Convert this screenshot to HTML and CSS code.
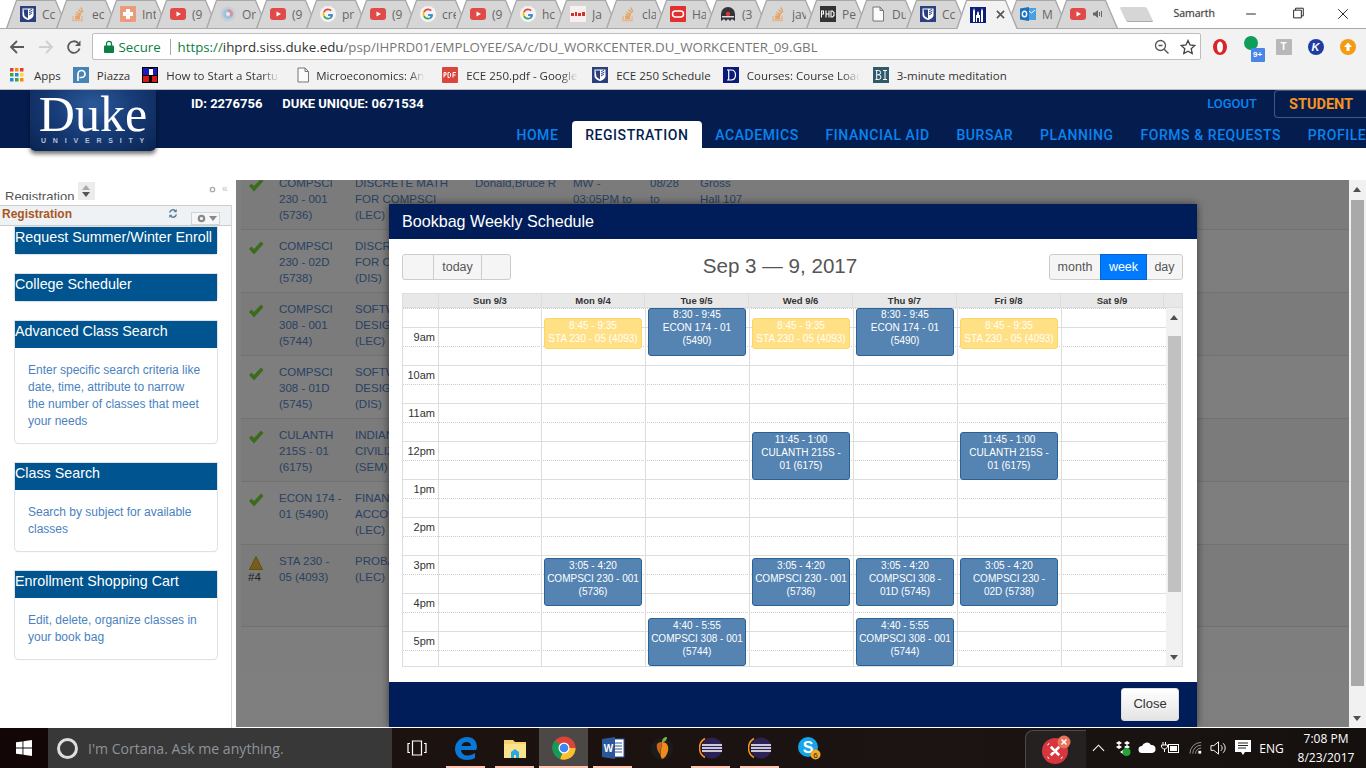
FILE: index.html
```html
<!DOCTYPE html>
<html lang="en">
<head>
<meta charset="utf-8">
<title>Bookbag Weekly Schedule</title>
<link rel="stylesheet" href="styles.css">
</head>
<body>
<svg class="defs" width="0" height="0" aria-hidden="true">
  <symbol id="i-shield" viewBox="0 0 16 16"><rect width="16" height="16" fill="#2b3f7e"/><path d="M2.500 2.500h11v6.500c0 2.500-3 4.200-5.500 5-2.500-.8-5.500-2.500-5.500-5z" fill="#fff"/><path d="M8 3.500v9l-3.500-2.500-1-6.500z" fill="#2b3f7e"/><path d="M9 5l3-2M9 7l3.500-2M9 9l3-2" stroke="#2b3f7e" stroke-width="1"/></symbol>
  <symbol id="i-so" viewBox="0 0 16 16"><path d="M3 10v4.500h9V10" fill="none" stroke="#e9b48c" stroke-width="1.400"/><path d="M5 12.500h5M5 10.500l5 .5M5.500 8.300l5 1.200M6.500 6l4.500 2.300M8.500 3.500l3.500 3.500M11 1.500l1.800 4.500" stroke="#e8a05e" stroke-width="1.300" fill="none"/></symbol>
  <symbol id="i-plus" viewBox="0 0 16 16"><rect width="16" height="16" rx="1" fill="#eb9b7a"/><path d="M6 3h4v3h3v4h-3v3H6v-3H3V6h3z" fill="#fff"/></symbol>
  <symbol id="i-yt" viewBox="0 0 16 16"><rect y="2" width="16" height="12" rx="3" fill="#e04a4a"/><path d="M6.500 5.500l4.500 2.500-4.500 2.500z" fill="#fff"/></symbol>
  <symbol id="i-orb" viewBox="0 0 16 16"><circle cx="8" cy="8" r="7.500" fill="#c9ced6"/><circle cx="8" cy="8" r="5" fill="#9dc4dc"/><path d="M8 3a5 5 0 0 1 4 8L8 8z" fill="#d88fa8"/><circle cx="8" cy="8" r="2" fill="#e8e8e8"/></symbol>
  <symbol id="i-g" viewBox="0 0 16 16"><circle cx="8" cy="8" r="8" fill="#f4f4f4"/><path d="M12.600 8.200H8.200v1.700h2.500c-.3 1.200-1.300 1.900-2.600 1.900A3.800 3.800 0 0 1 4.600 9.500L3.200 10.600A5.500 5.500 0 0 0 8.100 13.500c2.900 0 4.700-2 4.700-4.700z" fill="#35a853"/><path d="M4.600 9.500a3.800 3.800 0 0 1 0-3l-1.400-1.100a5.500 5.500 0 0 0 0 5.200z" fill="#fbbc05"/><path d="M8.100 4.200c1 0 1.800.3 2.500 1l1.200-1.200A5.500 5.500 0 0 0 3.200 5.400l1.400 1.100a3.800 3.800 0 0 1 3.500-2.300z" fill="#ea4335"/><path d="M12.800 8.800c0-.3 0-.6-.2-.6H8.200v1.700h2.500c-.2.700-.5 1.100-1 1.400l1.400 1.100c1-.9 1.700-2 1.700-3.600z" fill="#4285f4"/></symbol>
  <symbol id="i-news" viewBox="0 0 16 16"><rect width="16" height="16" fill="#f7f0ee"/><path d="M1 7h3v3H1zM5 6h2v4H5zM8 7h3v3H8zM12 6h3v4h-3z" fill="#d3312c"/></symbol>
  <symbol id="i-ora" viewBox="0 0 16 16"><rect width="16" height="16" rx="1" fill="#e2302f"/><rect x="2.500" y="5" width="11" height="6" rx="3" fill="none" stroke="#fff" stroke-width="1.500"/></symbol>
  <symbol id="i-mask" viewBox="0 0 16 16"><path d="M1 15V8a7 7 0 0 1 14 0v7l-3-2-2 2-2-2-2 2-2-2z" fill="#33333a"/><circle cx="8" cy="8" r="2.200" fill="#d33"/><rect x="2" y="10" width="12" height="1.500" fill="#ddd"/></symbol>
  <symbol id="i-phd" viewBox="0 0 16 16"><rect width="16" height="16" fill="#333"/><path d="M1.500 4.500v7M1.500 5h2v3h-2M6 4.500v7M9 4.500v7M6 8h3M11 4.500v7M11 5h1.500l1.500 1.500v3L12.500 11H11" fill="none" stroke="#fff" stroke-width="1.100"/></symbol>
  <symbol id="i-doc" viewBox="0 0 16 16"><path d="M3 1h7l3.500 3.500V15H3zM10 1v3.500h3.500" fill="#fbfbfb" stroke="#777" stroke-width="1"/></symbol>
  <symbol id="i-chapel" viewBox="0 0 16 16"><rect width="16" height="16" fill="#0b1f78"/><path d="M3 15V4l1-3 1 3v11zM6 15V8h1V6l1-2 1 2v2h1v7zM11 15V4l1-3 1 3v11z" fill="#fff"/><path d="M7 15v-4h2v4z" fill="#0b1f78"/></symbol>
  <symbol id="i-out" viewBox="0 0 16 16"><rect x="6" y="2" width="10" height="12" fill="#4aa0e0"/><path d="M9 5l2.500 2L15 4" stroke="#fff" fill="none"/><path d="M0 2.500L9 1v14L0 13.500z" fill="#1c72bd"/><ellipse cx="4.500" cy="8" rx="2.200" ry="2.800" fill="none" stroke="#fff" stroke-width="1.400"/></symbol>
  <symbol id="i-piazza" viewBox="0 0 16 16"><rect width="16" height="16" fill="#4684b5"/><path d="M5 14V7a3.500 3.500 0 1 1 3.500 3.500H6.500" fill="none" stroke="#fff" stroke-width="1.700"/></symbol>
  <symbol id="i-start" viewBox="0 0 16 16"><rect width="16" height="16" fill="#000"/><rect x="1" y="1" width="6" height="7" fill="#1a1ac0"/><rect x="7" y="2" width="4" height="6" fill="#fff"/><rect x="11" y="1" width="4" height="7" fill="#1a1ac0"/><rect x="1" y="9" width="6" height="6" fill="#d81a1a"/><rect x="10" y="9" width="5" height="6" fill="#d81a1a"/></symbol>
  <symbol id="i-speak" viewBox="0 0 12 12"><path d="M1 4.500h2L6 2v8L3 7.500H1z" fill="#666"/><path d="M7.500 4v4M9.500 3v6" stroke="#666" stroke-width="1"/></symbol>
</svg>

<div class="tabstrip">
  <div class="tab"><svg class="fav"><use href="#i-shield"/></svg><span class="tab-t">Cc</span></div>
  <div class="tab"><svg class="fav"><use href="#i-so"/></svg><span class="tab-t">ec</span></div>
  <div class="tab"><svg class="fav"><use href="#i-plus"/></svg><span class="tab-t">Int</span></div>
  <div class="tab"><svg class="fav"><use href="#i-yt"/></svg><span class="tab-t">(9</span></div>
  <div class="tab"><svg class="fav"><use href="#i-orb"/></svg><span class="tab-t">Or</span></div>
  <div class="tab"><svg class="fav"><use href="#i-yt"/></svg><span class="tab-t">(9</span></div>
  <div class="tab"><svg class="fav"><use href="#i-g"/></svg><span class="tab-t">pr</span></div>
  <div class="tab"><svg class="fav"><use href="#i-yt"/></svg><span class="tab-t">(9</span></div>
  <div class="tab"><svg class="fav"><use href="#i-g"/></svg><span class="tab-t">cre</span></div>
  <div class="tab"><svg class="fav"><use href="#i-yt"/></svg><span class="tab-t">(9</span></div>
  <div class="tab"><svg class="fav"><use href="#i-g"/></svg><span class="tab-t">hc</span></div>
  <div class="tab"><svg class="fav"><use href="#i-news"/></svg><span class="tab-t">Ja</span></div>
  <div class="tab"><svg class="fav"><use href="#i-so"/></svg><span class="tab-t">cla</span></div>
  <div class="tab"><svg class="fav"><use href="#i-ora"/></svg><span class="tab-t">Ha</span></div>
  <div class="tab"><svg class="fav"><use href="#i-mask"/></svg><span class="tab-t">(3</span></div>
  <div class="tab"><svg class="fav"><use href="#i-so"/></svg><span class="tab-t">jav</span></div>
  <div class="tab"><svg class="fav"><use href="#i-phd"/></svg><span class="tab-t">Pe</span></div>
  <div class="tab"><svg class="fav"><use href="#i-doc"/></svg><span class="tab-t">Du</span></div>
  <div class="tab"><svg class="fav"><use href="#i-shield"/></svg><span class="tab-t">Cc</span></div>
  <div class="tab tab-active"><svg class="fav"><use href="#i-chapel"/></svg><svg class="tab-x" viewBox="0 0 10 10"><path d="M1 1l8 8M9 1l-8 8" stroke="#555" stroke-width="1.800"/></svg></div>
  <div class="tab"><svg class="fav"><use href="#i-out"/></svg><span class="tab-t">M</span></div>
  <div class="tab"><svg class="fav"><use href="#i-yt"/></svg><svg class="speak"><use href="#i-speak"/></svg></div>
  <div class="newtab"></div>
  <div class="winctl">
    <span class="profile">Samarth</span>
    <svg class="win-ic" viewBox="0 0 46 29"><path d="M18 14.500h10" stroke="#222" stroke-width="1"/></svg>
    <svg class="win-ic" viewBox="0 0 46 29"><path d="M19.500 10.500h8v8h-8zM21.500 10.500v-2h8v8h-2" fill="none" stroke="#222" stroke-width="1"/></svg>
    <svg class="win-ic" viewBox="0 0 46 29"><path d="M18 9.500l10 10M28 9.500l-10 10" stroke="#222" stroke-width="1"/></svg>
  </div>
</div>

<div class="toolbar">
  <svg class="nav-ic" viewBox="0 0 16 16"><path d="M15 8H2M8 2L2 8l6 6" fill="none" stroke="#5a5a5a" stroke-width="1.800"/></svg>
  <svg class="nav-ic" viewBox="0 0 16 16"><path d="M1 8h13M8 2l6 6-6 6" fill="none" stroke="#cfcfcf" stroke-width="1.800"/></svg>
  <svg class="nav-ic" viewBox="0 0 16 16"><path d="M13.500 9.500A5.800 5.800 0 1 1 12 4" fill="none" stroke="#5a5a5a" stroke-width="1.800"/><path d="M14.500 1.500v5.500H9z" fill="#5a5a5a"/></svg>
  <div class="omnibox">
    <svg class="lock" viewBox="0 0 10 13"><path d="M2.500 6V3.800a2.500 2.500 0 0 1 5 0V6" fill="none" stroke="#0b8043" stroke-width="1.300"/><rect y="5.500" width="10" height="7.500" rx="1" fill="#0b8043"/></svg>
    <span class="secure">Secure</span>
    <span class="sep"></span>
    <span class="url"><span class="url-s">https://</span><span class="url-h">ihprd.siss.duke.edu</span>/psp/IHPRD01/EMPLOYEE/SA/c/DU_WORKCENTER.DU_WORKCENTER_09.GBL</span>
    <svg class="omni-ic" viewBox="0 0 16 16"><circle cx="6.500" cy="6.500" r="5" fill="none" stroke="#555" stroke-width="1.300"/><path d="M4.500 6.500h4M10.200 10.200l4.300 4.300" stroke="#555" stroke-width="1.400"/></svg>
    <svg class="omni-ic" viewBox="0 0 16 16"><path d="M8 1.500l2 4.500 4.800.5-3.600 3.200 1 4.800L8 12.200l-4.200 2.300 1-4.800L1.200 6.500 6 6z" fill="none" stroke="#444" stroke-width="1.300"/></svg>
  </div>
  <svg class="ext" viewBox="0 0 16 16"><ellipse cx="8" cy="8" rx="7" ry="8" fill="#d9252a"/><ellipse cx="8" cy="8" rx="3" ry="5.500" fill="#fff"/></svg>
  <span class="ext ext-badge"><span class="green-dot"></span><span class="badge">9+</span></span>
  <span class="ext ext-t">T</span>
  <span class="ext ext-k">K</span>
  <svg class="ext" viewBox="0 0 16 16"><circle cx="8" cy="8" r="8" fill="#f39c12"/><path d="M8 3.500L12 8H9.500v4h-3V8H4z" fill="#fff"/></svg>
</div>

<div class="bookmarks">
  <span class="bm bm-apps"><svg class="bm-ic apps" viewBox="0 0 14 14"><rect width="3.500" height="3.500" fill="#e53935"/><rect x="5" width="3.500" height="3.500" fill="#fb8c00"/><rect x="10" width="3.500" height="3.500" fill="#e53935"/><rect y="5" width="3.500" height="3.500" fill="#43a047"/><rect x="5" y="5" width="3.500" height="3.500" fill="#1e88e5"/><rect x="10" y="5" width="3.500" height="3.500" fill="#fdd835"/><rect y="10" width="3.500" height="3.500" fill="#1e88e5"/><rect x="5" y="10" width="3.500" height="3.500" fill="#43a047"/><rect x="10" y="10" width="3.500" height="3.500" fill="#fb8c00"/></svg>Apps</span>
  <span class="bm bm-piazza"><svg class="bm-ic"><use href="#i-piazza"/></svg>Piazza</span>
  <span class="bm bm-start"><svg class="bm-ic"><use href="#i-start"/></svg><span class="bm-fade">How to Start a Startup</span></span>
  <span class="bm bm-micro"><svg class="bm-ic"><use href="#i-doc"/></svg><span class="bm-fade">Microeconomics: An Intuitive</span></span>
  <span class="bm bm-pdf"><svg class="bm-ic" viewBox="0 0 16 16"><rect width="16" height="16" rx="1" fill="#d9463e"/><path d="M2 10.500v-5h2v2.500H2M6 5.500v5h1.500l1-1v-3l-1-1zM11 10.500v-5h3M11 8h2.500" fill="none" stroke="#fff" stroke-width="1"/></svg><span class="bm-fade">ECE 250.pdf - Google Drive</span></span>
  <span class="bm bm-sched"><svg class="bm-ic"><use href="#i-shield"/></svg>ECE 250 Schedule</span>
  <span class="bm bm-course"><svg class="bm-ic" viewBox="0 0 16 16"><rect width="16" height="16" fill="#0a1a7a"/><path d="M4 3h4c3 0 4.500 2.200 4.500 5s-1.500 5-4.500 5H4M5.700 3v10" fill="none" stroke="#fff" stroke-width="1.200"/></svg><span class="bm-fade">Courses: Course Load</span></span>
  <span class="bm"><svg class="bm-ic" viewBox="0 0 16 16"><rect width="16" height="16" fill="#2f5a6a"/><path d="M2.500 3.500h3a1.800 1.800 0 0 1 0 4.200 2 2 0 0 1 0 4.800h-3M3.700 3.500v9M3.700 7.800h2M10 3.500h4M10 12.500h4M12 3.500v9" fill="none" stroke="#fff" stroke-width="1"/></svg>3-minute meditation</span>
</div>

<header class="duke">
  <div class="logo"><span class="logo-d">Duke</span><span class="logo-u">UNIVERSITY</span></div>
  <div class="duke-main">
    <div class="duke-top">
      <div class="ids"><span>ID: 2276756</span><span>DUKE UNIQUE: 0671534</span></div>
      <div class="duke-right"><span class="logout">LOGOUT</span><span class="student">STUDENT</span></div>
    </div>
    <nav class="mainnav">
      <span class="nav-item">HOME</span>
      <span class="nav-item nav-on">REGISTRATION</span>
      <span class="nav-item">ACADEMICS</span>
      <span class="nav-item">FINANCIAL AID</span>
      <span class="nav-item">BURSAR</span>
      <span class="nav-item">PLANNING</span>
      <span class="nav-item">FORMS &amp; REQUESTS</span>
      <span class="nav-item">PROFILE</span>
    </nav>
  </div>
</header>

<div class="content">
  <aside class="sidebar">
    <div class="crumb">
      <span class="crumb-t">Registration</span>
      <span class="crumb-arrows"><i class="ar-up"></i><i class="ar-down"></i></span>
      <span class="crumb-tools"><svg class="mini-gear" viewBox="0 0 8 8"><circle cx="4" cy="4" r="2.500" fill="none" stroke="#aaa" stroke-width="1.500"/></svg><span class="crumb-dbl">«</span></span>
    </div>
    <div class="panelbar">
      <span class="panel-t">Registration</span>
      <svg class="refresh" viewBox="0 0 12 12"><path d="M2 5a4 4 0 0 1 7-2M10 7a4 4 0 0 1-7 2" fill="none" stroke="#5a7f9c" stroke-width="1.700"/><path d="M10.500.5v4h-4zM1.500 11.500v-4h4z" fill="#5a7f9c"/></svg>
      <span class="gearbtn"><svg viewBox="0 0 10 10" class="gear"><circle cx="5" cy="5" r="3" fill="none" stroke="#888" stroke-width="2.400"/></svg><i class="caret"></i></span>
    </div>
    <div class="cards">
      <section class="card"><h3 class="card-h">Request Summer/Winter Enroll</h3></section>
      <section class="card"><h3 class="card-h">College Scheduler</h3></section>
      <section class="card"><h3 class="card-h">Advanced Class Search</h3><p class="card-b">Enter specific search criteria like date, time, attribute to narrow the number of classes that meet your needs</p></section>
      <section class="card"><h3 class="card-h">Class Search</h3><p class="card-b">Search by subject for available classes</p></section>
      <section class="card"><h3 class="card-h">Enrollment Shopping Cart</h3><p class="card-b">Edit, delete, organize classes in your book bag</p></section>
    </div>
  </aside>

  <main class="main">
    <div class="rows">
      <div class="row"><svg class="ok" viewBox="0 0 16 14"><path d="M1 8l2.500-2.500L6 8l7-7.500L15.500 3 6 13.500z"/></svg><div class="c-class">COMPSCI<br>230 - 001<br>(5736)</div><div class="c-title">DISCRETE MATH<br>FOR COMPSCI<br>(LEC)</div><div class="c-inst">Donald,Bruce R</div><div class="c-time">MW -<br>03:05PM to</div><div class="c-date">08/28<br>to</div><div class="c-room">Gross<br>Hall 107</div></div>
      <div class="row"><svg class="ok" viewBox="0 0 16 14"><path d="M1 8l2.500-2.500L6 8l7-7.500L15.500 3 6 13.500z"/></svg><div class="c-class">COMPSCI<br>230 - 02D<br>(5738)</div><div class="c-title">DISCRETE MATH<br>FOR COMPSCI<br>(DIS)</div></div>
      <div class="row"><svg class="ok" viewBox="0 0 16 14"><path d="M1 8l2.500-2.500L6 8l7-7.500L15.500 3 6 13.500z"/></svg><div class="c-class">COMPSCI<br>308 - 001<br>(5744)</div><div class="c-title">SOFTWARE<br>DESIGN<br>(LEC)</div></div>
      <div class="row"><svg class="ok" viewBox="0 0 16 14"><path d="M1 8l2.500-2.500L6 8l7-7.500L15.500 3 6 13.500z"/></svg><div class="c-class">COMPSCI<br>308 - 01D<br>(5745)</div><div class="c-title">SOFTWARE<br>DESIGN<br>(DIS)</div></div>
      <div class="row"><svg class="ok" viewBox="0 0 16 14"><path d="M1 8l2.500-2.500L6 8l7-7.500L15.500 3 6 13.500z"/></svg><div class="c-class">CULANTH<br>215S - 01<br>(6175)</div><div class="c-title">INDIAN<br>CIVILIZATION<br>(SEM)</div></div>
      <div class="row"><svg class="ok" viewBox="0 0 16 14"><path d="M1 8l2.500-2.500L6 8l7-7.500L15.500 3 6 13.500z"/></svg><div class="c-class">ECON 174 -<br>01 (5490)</div><div class="c-title">FINANCIAL<br>ACCOUNTING<br>(LEC)</div></div>
      <div class="row row-wait"><div class="warn"><svg viewBox="0 0 14 14"><path d="M7 .5L13.500 13.500H.5z" fill="#f0bc3a" stroke="#c89a20"/></svg><span>#4</span></div><div class="c-class">STA 230 -<br>05 (4093)</div><div class="c-title">PROBABILITY<br>(LEC)</div></div>
      <div class="row row-foot"></div>
    </div>
    <div class="overlay"></div>
    <div class="modal">
      <div class="modal-h">Bookbag Weekly Schedule</div>
      <div class="modal-b">
        <div class="cal-bar">
          <div class="btns"><span class="btn btn-prev"></span><span class="btn btn-today">today</span><span class="btn btn-next"></span></div>
          <div class="cal-title">Sep 3 — 9, 2017</div>
          <div class="btns"><span class="btn btn-month">month</span><span class="btn btn-week">week</span><span class="btn btn-day">day</span></div>
        </div>
        <div class="cal">
          <div class="cal-head">
            <span></span><span>Sun 9/3</span><span>Mon 9/4</span><span>Tue 9/5</span><span>Wed 9/6</span><span>Thu 9/7</span><span>Fri 9/8</span><span>Sat 9/9</span><span></span>
          </div>
          <div class="cal-body">
            <div class="grid">
              <div class="slot minor"></div>
              <div class="slot"><span>9am</span></div><div class="slot minor"></div>
              <div class="slot"><span>10am</span></div><div class="slot minor"></div>
              <div class="slot"><span>11am</span></div><div class="slot minor"></div>
              <div class="slot"><span>12pm</span></div><div class="slot minor"></div>
              <div class="slot"><span>1pm</span></div><div class="slot minor"></div>
              <div class="slot"><span>2pm</span></div><div class="slot minor"></div>
              <div class="slot"><span>3pm</span></div><div class="slot minor"></div>
              <div class="slot"><span>4pm</span></div><div class="slot minor"></div>
              <div class="slot"><span>5pm</span></div><div class="slot minor"></div>
              <div class="cols">
                <div class="col"></div>
                <div class="col">
                  <div class="ev ev-y t845">8:45 - 9:35<br>STA 230 - 05 (4093)</div>
                  <div class="ev t305">3:05 - 4:20<br>COMPSCI 230 - 001 (5736)</div>
                </div>
                <div class="col">
                  <div class="ev t830">8:30 - 9:45<br>ECON 174 - 01 (5490)</div>
                  <div class="ev t440">4:40 - 5:55<br>COMPSCI 308 - 001 (5744)</div>
                </div>
                <div class="col">
                  <div class="ev ev-y t845">8:45 - 9:35<br>STA 230 - 05 (4093)</div>
                  <div class="ev t1145">11:45 - 1:00<br>CULANTH 215S - 01 (6175)</div>
                  <div class="ev t305">3:05 - 4:20<br>COMPSCI 230 - 001 (5736)</div>
                </div>
                <div class="col">
                  <div class="ev t830">8:30 - 9:45<br>ECON 174 - 01 (5490)</div>
                  <div class="ev t305">3:05 - 4:20<br>COMPSCI 308 - 01D (5745)</div>
                  <div class="ev t440">4:40 - 5:55<br>COMPSCI 308 - 001 (5744)</div>
                </div>
                <div class="col">
                  <div class="ev ev-y t845">8:45 - 9:35<br>STA 230 - 05 (4093)</div>
                  <div class="ev t1145">11:45 - 1:00<br>CULANTH 215S - 01 (6175)</div>
                  <div class="ev t305">3:05 - 4:20<br>COMPSCI 230 - 02D (5738)</div>
                </div>
                <div class="col"></div>
              </div>
            </div>
            <div class="cal-scroll"><i class="sb-up"></i><div class="sb-thumb"></div><i class="sb-down"></i></div>
          </div>
        </div>
      </div>
      <div class="modal-f"><span class="close-btn">Close</span></div>
    </div>
  </main>

  <div class="page-scroll"><i class="sb-up"></i><div class="ps-thumb"></div><i class="sb-down"></i></div>
</div>

<footer class="taskbar">
  <span class="start"><svg viewBox="0 0 16 16" class="win"><path d="M0 2.300L6.500 1.400v6.200H0zM7.400 1.300L16 0v7.600H7.400zM0 8.400h6.500v6.200L0 13.700zM7.400 8.400H16V16l-8.600-1.300z" fill="#fff"/></svg></span>
  <span class="search"><span class="cortana"></span><span class="search-t">I'm Cortana. Ask me anything.</span></span>
  <span class="tb-item"><svg viewBox="0 0 20 16" class="tb-ic-v"><path d="M5.500 1h9v14h-9zM3 3.500H1v9h2M17 3.500h2v9h-2" fill="none" stroke="#fff" stroke-width="1.200"/></svg></span>
  <span class="tb-item on"><svg viewBox="0 0 24 24" class="tb-ic"><path d="M22 14H7c.3 3.500 3 5.500 6.500 5.500 3 0 5.500-1 7.500-2.500v5c-2 1.200-5 2-8 2C6 24 1 19.500 1 13 1 6 6.500 1 13 1c6 0 10 4 10 10.500zM7.500 10h9.500c0-2.500-1.800-4-4.500-4-2.500 0-4.500 1.500-5 4z" fill="#0a78d7"/></svg></span>
  <span class="tb-item on"><svg viewBox="0 0 24 24" class="tb-ic"><path d="M1 4h9l2 2h11v16H1z" fill="#f5d36c"/><path d="M1 8h22v14H1z" fill="#fbe38e"/><path d="M8 22v-6l4-3 4 3v6h-3v-3h-2v3z" fill="#28a8e0"/></svg></span>
  <span class="tb-item on tb-active"><svg viewBox="0 0 24 24" class="tb-ic"><circle cx="12" cy="12" r="11.500" fill="#db4437"/><path d="M12 12L2 18A11.500 11.500 0 0 1 3 4.500z" fill="#0f9d58"/><path d="M12 12h11.500A11.500 11.500 0 0 1 8 23z" fill="#fbc02d"/><path d="M12 12L8 23A11.500 11.500 0 0 1 2 18z" fill="#0f9d58"/><circle cx="12" cy="12" r="5.500" fill="#fff"/><circle cx="12" cy="12" r="4.300" fill="#4285f4"/></svg></span>
  <span class="tb-item on"><svg viewBox="0 0 24 24" class="tb-ic"><rect x="10" y="3" width="13" height="18" fill="#fff" stroke="#2b579a"/><path d="M14 7h7M14 10h7M14 13h7M14 16h7" stroke="#2b579a"/><path d="M1 3l13-2v22L1 21z" fill="#2b579a"/><text x="7.500" y="16" font-family="Liberation Sans, sans-serif" font-size="10" font-weight="700" fill="#fff" text-anchor="middle">W</text></svg></span>
  <span class="tb-item"><svg viewBox="0 0 24 24" class="tb-ic"><circle cx="12" cy="13" r="11" fill="#1b1b1b"/><path d="M12 6c5 0 7 4 6 9-1 4-3 7-6 8-2-3-2-6-1-9z" fill="#f08a1c"/><path d="M7 8c2-2 4-2 5-2l-2 12c-2-2-4-6-3-10z" fill="#c9651a"/><path d="M12 6c0-3 2-5 5-5 0 3-2 5-5 5z" fill="#7cb342"/></svg></span>
  <span class="tb-item on"><svg viewBox="0 0 24 24" class="tb-ic"><circle cx="13" cy="12" r="10.500" fill="#2c2255"/><path d="M6 2.500A11 11 0 0 0 6 21.500" fill="none" stroke="#f7941e" stroke-width="1.500"/><path d="M3 9h20M3 12h20M3 15h20" stroke="#fff" stroke-width="1.500"/></svg></span>
  <span class="tb-item on"><svg viewBox="0 0 24 24" class="tb-ic"><circle cx="13" cy="12" r="10.500" fill="#2c2255"/><path d="M6 2.500A11 11 0 0 0 6 21.500" fill="none" stroke="#f7941e" stroke-width="1.500"/><path d="M3 9h20M3 12h20M3 15h20" stroke="#fff" stroke-width="1.500"/></svg></span>
  <span class="tb-item"><svg viewBox="0 0 24 24" class="tb-ic"><circle cx="11" cy="11" r="10" fill="#16a5e8"/><text x="11" y="17" font-family="Liberation Sans, sans-serif" font-size="16" font-weight="700" fill="#fff" text-anchor="middle">S</text><circle cx="18.500" cy="18.500" r="5" fill="#f9a825"/><text x="18.500" y="22" font-family="Liberation Sans, sans-serif" font-size="8" fill="#222" text-anchor="middle">6</text></svg></span>
  <span class="tray">
    <span class="tray-app"><svg viewBox="0 0 30 30" class="tray-red"><circle cx="14" cy="16" r="13" fill="#d8363e"/><path d="M14 16L7 9M14 16l7 7M14 16l7-7M14 16l-7 7" stroke="#fff" stroke-width="2.500" stroke-dasharray="6 3"/><circle cx="23" cy="7" r="6.500" fill="#e8735a"/><path d="M20.500 4.500l5 5M25.500 4.500l-5 5" stroke="#fff" stroke-width="1.500"/></svg></span>
    <svg viewBox="0 0 14 8" class="t-chev"><path d="M1 7l6-6 6 6" fill="none" stroke="#fff" stroke-width="1.200"/></svg>
    <svg viewBox="0 0 16 16" class="t-16 t-sync"><path d="M1 3l3-2 3 2-3 2zM9 3l3-2 3 2-3 2zM1 7l3-2 3 2-3 2zM9 7l3-2 3 2-3 2zM5 12l3-2 3 2-3 2z" fill="#fff"/><circle cx="11.500" cy="12" r="4" fill="#21a336"/></svg>
    <svg viewBox="0 0 18 12" class="t-cloud"><path d="M4 11a3.500 3.500 0 0 1 0-7 5 5 0 0 1 9-1 4 4 0 0 1 1 8z" fill="#fff"/></svg>
    <svg viewBox="0 0 20 12" class="t-batt"><path d="M3 0v3M5.500 0v3M1.500 3h6v2l-2 2H3.500l-2-2zM4.500 7v3" fill="none" stroke="#fff"/><rect x="8.500" y="2.500" width="10" height="8" fill="none" stroke="#fff"/><rect x="10" y="4" width="7" height="5" fill="#fff"/></svg>
    <svg viewBox="0 0 16 14" class="t-wifi"><path d="M1 13A12 12 0 0 1 13 1M4 13a9 9 0 0 1 9-9M7 13a6 6 0 0 1 6-6" fill="none" stroke="#999" stroke-width="1"/><rect x="10" y="10" width="3" height="3" fill="#fff"/></svg>
    <svg viewBox="0 0 18 16" class="t-vol"><path d="M1 5.500h3L9 1.500v13l-5-4H1z" fill="none" stroke="#fff"/><path d="M11.500 5a4 4 0 0 1 0 6M14 3a7 7 0 0 1 0 10" fill="none" stroke="#fff"/></svg>
    <svg viewBox="0 0 16 16" class="t-16 t-note"><path d="M0 0h16v12h-6l-2 3-2-3H0z" fill="#fff"/><path d="M3 3h10M3 5.500h10M3 8h8" stroke="#222"/></svg>
    <span class="t-eng">ENG</span>
    <span class="t-clock"><span>7:08 PM</span><span>8/23/2017</span></span>
  </span>
</footer>
</body>
</html>
```

FILE: styles.css
```css
* { box-sizing: border-box; }
html, body { margin: 0; height: 100%; }
body {
  width: 1366px; height: 768px; overflow: hidden; background: #fff;
  display: flex; flex-direction: column;
  font-family: "Liberation Sans", Arial, sans-serif;
}
.defs { position: absolute; }
svg { display: block; flex: none; }

/* browser chrome */
.tabstrip {
  height: 29px; flex: none; display: flex; padding-left: 6px;
  border-bottom: 1px solid #a9a9a9; background: #fff;
}
.tab {
  position: relative; width: 62px; height: 28px; margin-right: -12px; flex: none;
  display: flex; align-items: center; padding: 0 0 0 14px; gap: 6px;
  background: #a8a8a8;
  clip-path: polygon(0 100%, 10px 0, 50px 0, 62px 100%);
  font: 12px "Open Sans", sans-serif; color: #666;
}
.tab::before {
  content: ""; position: absolute; inset: 0; background: #d6d6d6;
  clip-path: polygon(1.500px 100%, 11px 1px, 49px 1px, 60.500px 100%);
}
.tab > * { position: relative; }
.tab-active { z-index: 2; height: 29px; }
.tab-active::before { background: #f2f2f2; clip-path: polygon(1.500px 100%, 11px 1px, 49px 1px, 60.500px 100%); }
.fav { width: 16px; height: 16px; }
.tab-t { width: 14px; overflow: hidden; white-space: nowrap; }
.tab-x { width: 9px; height: 9px; margin-left: 4px; }
.speak { width: 12px; height: 12px; }
.newtab {
  width: 27px; height: 15px; margin: 7px 0 0 17px; flex: none;
  background: #d6d6d6; border-radius: 2px; transform: skewX(25deg);
  border-bottom: 1px solid #aaa;
}
.winctl { margin-left: auto; display: flex; align-items: center; height: 28px; }
.profile { font: 10.500px "Open Sans", sans-serif; color: #444; margin: -2px 13px 0 0; text-shadow: 0 0 1px #999; }
.win-ic { width: 46px; height: 28px; }

.toolbar {
  height: 33px; flex: none; display: flex; align-items: center;
  background: #f2f2f2; padding: 4px 0 2px 9px;
}
.nav-ic { width: 16px; height: 16px; margin-right: 12.500px; }
.omnibox {
  width: 1109px; height: 27px; margin-left: -3px; display: flex; align-items: center;
  background: #fff; border: 1px solid #bdbdbd; border-radius: 2px;
  padding: 0 4px 0 11px; font: 13.300px "Open Sans", sans-serif; color: #777;
}
.lock { width: 10px; height: 13px; }
.secure { color: #0b8043; margin-left: 5px; width: 41px; white-space: nowrap; }
.sep { width: 1px; height: 16px; background: #aaa; margin: 0 7px 0 10px; }
.url { flex: 1; white-space: nowrap; overflow: hidden; }
.url-s { color: #0b8043; }
.url-h { color: #333; }
.omni-ic { width: 16px; height: 16px; margin-left: 10px; }
.ext { width: 16px; height: 16px; margin: 0 5px 0 11px; }
.ext-badge { position: relative; }
.green-dot { display: block; width: 14px; height: 14px; margin-top: -3px; border-radius: 50%; background: #0f9d58; }
.badge {
  position: absolute; left: 7px; top: 9px; width: 14px; height: 14px; background: #4a86e8; color: #fff;
  font: 700 8px/14px "Liberation Sans", sans-serif; text-align: center; border-radius: 1px;
}
.ext-t { background: #b8b8b8; color: #fff; font: 700 10px/16px "Liberation Sans", sans-serif; text-align: center; border-radius: 1px; }
.ext-k { background: #1f3da0; color: #fff; font: italic 700 11px/16px "Liberation Sans", sans-serif; text-align: center; border-radius: 50%; }

.bookmarks {
  height: 28px; flex: none; display: flex; align-items: center; padding: 0 0 1px 8px;
  background: #f2f2f2; border-bottom: 1px solid #bdbdbd;
  font: 11.500px "Open Sans", sans-serif; color: #333;
}
.bm { display: flex; align-items: center; gap: 8px; white-space: nowrap; margin-right: 12px; flex: none; }
.bm-ic { width: 16px; height: 16px; }
.apps { width: 14px; height: 14px; margin: 0 2px 0 2px; }
.bm-fade { overflow: hidden; display: block; -webkit-mask-image: linear-gradient(90deg, #000 85%, transparent); mask-image: linear-gradient(90deg, #000 85%, transparent); }
.bm-start { margin-right: 16px; }
.bm-start .bm-fade { width: 113px; }
.bm-micro { margin-right: 17px; }
.bm-micro .bm-fade { width: 109px; margin-left: -3px; }
.bm-pdf { margin-right: 14px; }
.bm-pdf .bm-fade { width: 112px; }
.bm-course { margin-right: 13px; }
.bm-course .bm-fade { width: 113px; }

/* Duke header */
.duke { height: 58px; flex: none; display: flex; background: #051d4e; position: relative; z-index: 3; }
.logo {
  width: 126px; height: 61px; margin-left: 30px; flex: none;
  display: flex; flex-direction: column; align-items: center;
  background: radial-gradient(ellipse at 50% 25%, #2b5a98 0, #173c78 45%, #0a2350 100%);
  border-radius: 0 0 5px 5px; box-shadow: 0 3px 4px rgba(0,0,0,.55);
  color: #fff;
}
.logo-d { font: 50px/46px "Liberation Serif", serif; margin-top: 1px; }
.logo-u { font: 700 7px/8px "Liberation Sans", sans-serif; letter-spacing: 6.800px; margin: 0 -6px 0 0; color: #b5c2d8; }
.duke-main { flex: 1; min-width: 0; display: flex; flex-direction: column; padding-left: 35px; }
.duke-top { height: 31px; display: flex; justify-content: space-between; }
.ids { display: flex; gap: 20px; padding-top: 6px; font: 700 13px/16px "Roboto", sans-serif; color: #fff; }
.duke-right { display: flex; }
.logout { font: 500 13px/16px "Roboto", sans-serif; color: #0a84f0; padding: 6px 17px 0 0; }
.student {
  width: 92px; height: 28px; border: 1px solid #46587a; border-right: 0; border-radius: 4px 0 0 4px;
  font: 700 14.500px/27px "Roboto", sans-serif; color: #f7931e; padding-left: 14px;
}
.mainnav { height: 27px; display: flex; padding-left: 312px; overflow: hidden; font: 500 14px/28px "Roboto", sans-serif; letter-spacing: .56px; color: #0a84f0; }
.nav-item { padding: 0 13.400px; white-space: nowrap; flex: none; }
.nav-on { background: #fff; color: #051d4e; border-radius: 4px 4px 0 0; }

/* page body */
.content { flex: 1; min-height: 0; display: flex; padding: 32px 0 1px; background: #fff; }
.sidebar { width: 232px; flex: none; position: relative; display: flex; flex-direction: column; }
.sidebar::after { content: ""; position: absolute; right: 0; top: 25px; bottom: -1px; width: 1px; background: #d3d7de; }
.crumb { height: 25px; flex: none; position: relative; padding-left: 5px; overflow: hidden; }
.crumb-t { display: block; font-size: 13px; line-height: 14px; color: #555; height: 20px; padding-top: 10px; overflow: hidden; }
.crumb-arrows { position: absolute; left: 78px; top: 2px; width: 17px; height: 18px; background: #ececec; }
.ar-up, .ar-down { position: absolute; left: 4px; width: 0; height: 0; border-left: 4px solid transparent; border-right: 4px solid transparent; }
.ar-up { top: 3px; border-bottom: 5px solid #aaa; }
.ar-down { top: 10px; border-top: 5px solid #555; }
.crumb-tools { position: absolute; left: 209px; top: 5px; display: flex; gap: 6px; align-items: center; color: #bbb; font-size: 10px; line-height: 8px; }
.mini-gear { width: 7px; height: 7px; }
.panelbar {
  height: 21px; flex: none; margin-right: 1px; display: flex; align-items: center; padding: 0 0 3px 2px; position: relative;
  background: #eff2f4; border-top: 1px solid #ccc; border-bottom: 1px solid #ccc;
}
.panel-t { font-size: 12px; font-weight: 700; color: #a9561e; }
.refresh { position: absolute; left: 168px; top: 2px; width: 10px; height: 11px; }
.gearbtn { position: absolute; left: 191px; top: 6px; width: 29px; height: 13px; background: #f6f6f6; border: 1px solid #d4d4d4; display: flex; align-items: center; gap: 3px; padding-left: 5px; }
.gear { width: 9px; height: 9px; }
.caret { width: 0; height: 0; border-left: 4.500px solid transparent; border-right: 4.500px solid transparent; border-top: 5px solid #888; }
.cards { padding: 1px 0 0 15px; display: flex; flex-direction: column; gap: 20px; }
.card { width: 202px; background: #fff; border-radius: 0 0 4px 4px; box-shadow: 0 0 0 1px #dfe1e5, 0 1px 1px #d0d2d6; }
.card-h { margin: 0; height: 27px; background: #00548f; color: #fff; font-size: 14.300px; font-weight: 400; line-height: 20px; white-space: nowrap; }
.card-b { margin: 0; padding: 14px 14px 13px 13px; font-size: 12px; line-height: 17px; color: #4a82bf; }

.main { flex: 1; min-width: 0; margin-left: 4px; position: relative; overflow: hidden; }
.rows { margin-top: -13px; padding-left: 5px; font-size: 11.500px; line-height: 16px; color: #5484c4; background: #fff; }
.row { position: relative; height: 63px; padding: 8px 0 0 38px; display: flex; background: #f7f7f7; border-bottom: 1px solid #e2e2e2; }
.row:nth-child(even) { background: #fcfcfc; }
.row-wait { height: 82px; }
.row-foot { height: 46px; border: 0; background: #f6f6f6; }
.ok { position: absolute; left: 7px; top: 11px; width: 16px; height: 14px; fill: #74d836; }
.warn { position: absolute; left: 7px; top: 11px; width: 16px; color: #444; font-size: 11.500px; line-height: 14px; }
.warn svg { width: 14px; height: 14px; margin-left: 1px; }
.c-class { width: 76px; flex: none; }
.c-title { width: 120px; flex: none; white-space: nowrap; }
.c-inst { width: 98px; flex: none; white-space: nowrap; }
.c-time { width: 77px; flex: none; white-space: nowrap; }
.c-date { width: 50px; flex: none; }
.c-room { flex: none; }

.overlay { position: absolute; inset: 0; background: rgba(0,0,0,.5); }
.modal {
  position: absolute; left: 153px; top: 24px; width: 808px; bottom: 0;
  display: flex; flex-direction: column; background: #fff; box-shadow: 0 0 8px rgba(0,0,0,.55);
}
.modal-h { height: 35px; flex: none; padding-left: 13px; background: #001d5a; color: #fff; font-size: 16.100px; line-height: 35px; }
.modal-b { flex: 1; min-height: 0; padding: 15px 14px 0 13px; }
.modal-f { height: 45px; flex: none; background: #001d5a; display: flex; justify-content: flex-end; padding: 6px 18px 0 0; }
.close-btn {
  width: 58px; height: 33px; border-radius: 3px; border: 1px solid #ddd;
  background: linear-gradient(#fff, #e4e4e4); font-size: 13px; line-height: 30px; text-align: center; color: #333;
}
.cal-bar { height: 26px; display: flex; justify-content: space-between; align-items: flex-start; margin-bottom: 13px; }
.btns { display: flex; }
.btn {
  height: 26px; display: block; background: #f5f5f5; border: 1px solid #ccc; margin-left: -1px;
  font-size: 12.500px; line-height: 24px; text-align: center; color: #555;
}
.btn:first-child { margin-left: 0; border-radius: 3px 0 0 3px; }
.btn:last-child { border-radius: 0 3px 3px 0; }
.btn-prev { width: 32px; }
.btn-today { width: 49px; }
.btn-next { width: 30px; }
.btn-month { width: 52px; }
.btn-week { width: 47px; background: #007bff; border-color: #0a62d0; color: #fff; position: relative; }
.btn-day { width: 37px; }
.cal-title { font-size: 20.600px; line-height: 23px; color: #555; }

.cal { height: 374px; overflow: hidden; border-left: 1px solid #ddd; border-right: 1px solid #ddd; border-bottom: 1px solid #ddd; }
.cal-head {
  height: 14px; display: grid; grid-template-columns: 35px 103px 103px 104px 104px 104px 104px 103px 1fr;
  background: #e8e8e8; border-top: 1px solid #ddd; font-size: 9.500px; font-weight: 700; line-height: 13px; color: #333; text-align: center;
}
.cal-head span { border-left: 1px solid #ddd; }
.cal-head span:first-child { border-left: 0; }
.cal-body { display: flex; height: 359px; border-top: 1px solid #ddd; }
.grid { width: 763px; flex: none; position: relative; }
.slot { height: 19px; border-top: 1px solid #ddd; font-size: 11px; line-height: 18px; color: #333; }
.slot span { display: block; width: 32px; text-align: right; }
.minor { border-top: 1px dotted #ccc; }
.cols { position: absolute; left: 35px; top: 0; bottom: 0; width: 728px; display: grid; grid-template-columns: 103px repeat(6, 104px); }
.col { position: relative; border-left: 1px solid #ddd; }
.ev {
  position: absolute; left: 2px; width: 98px; height: 48px; padding: 0 1.500px; overflow: hidden;
  background: #5684b2; border: 1px solid #2a6298; border-radius: 3px;
  font-size: 10px; line-height: 13px; color: #fff; text-align: center;
}
.ev-y { height: 31px; background: #ffe084; border-color: #fdd560; }
.t830 { top: 0; }
.t830::before { content: ""; display: block; margin-top: -1px; }
.t845 { top: 10px; }
.t1145 { top: 124px; }
.t305 { top: 250px; }
.t440 { top: 310px; }
.cal-scroll { flex: 1; position: relative; background: #f1f1f1; display: flex; flex-direction: column; }
.sb-up, .sb-down { position: absolute; left: 4px; width: 0; height: 0; border-left: 4.500px solid transparent; border-right: 4.500px solid transparent; }
.sb-up { top: 7px; border-bottom: 5px solid #505050; }
.sb-down { bottom: 6px; border-top: 5px solid #505050; }
.sb-thumb { position: absolute; left: 2px; top: 28px; width: 13px; height: 256px; background: #c1c1c1; }
.page-scroll { width: 17px; flex: none; position: relative; background: #f1f1f1; }
.ps-thumb { position: absolute; left: 2px; top: 20px; width: 13px; height: 486px; background: #a9a9a9; }

/* taskbar */
.taskbar { height: 40px; flex: none; display: flex; background: linear-gradient(90deg, #120807 0, #1c1210 30%, #1b1412 70%, #15100e 100%); color: #fff; position: relative; }
.start { width: 48px; display: flex; align-items: center; justify-content: center; background: #120706; }
.win { width: 16px; height: 16px; }
.search { width: 344px; display: flex; align-items: center; background: #383838; padding-left: 9px; }
.cortana { width: 21px; height: 21px; border-radius: 50%; border: 3px solid #ddd; }
.search-t { margin-left: 10px; font: 14.100px "Open Sans", sans-serif; color: #8e9499; white-space: nowrap; }
.tb-item { width: 49px; display: flex; align-items: center; justify-content: center; position: relative; }
.tb-item.on::after { content: ""; position: absolute; left: 5px; right: 5px; bottom: 0; height: 2px; background: #ffc4b2; }
.tb-active { background: #4c4846; }
.tb-active.on::after { left: 0; right: 0; }
.tb-ic { width: 24px; height: 24px; }
.tb-ic-v { width: 20px; height: 16px; }
.tray { margin-left: auto; display: flex; align-items: center; height: 40px; position: relative; }
.tray-app {
  width: 61px; height: 38px; margin-top: 2px; margin-right: 6.500px; border: 1px solid #4a4a4a; border-bottom: 0; border-right: 0;
  border-radius: 8px 0 0 0; background: #242120; display: flex; align-items: center; justify-content: center;
}
.tray-red { width: 30px; height: 30px; }
.t-chev { width: 13px; height: 8px; margin-right: 10px; }
.t-16 { width: 16px; height: 16px; }
.t-sync { margin-right: 7px; }
.t-cloud { width: 18px; height: 12px; margin-right: 4px; }
.t-batt { width: 20px; height: 12px; margin-right: 9px; }
.t-wifi { width: 15px; height: 14px; margin-right: 6px; }
.t-vol { width: 17px; height: 16px; margin-right: 8px; }
.t-eng { width: 29px; margin-left: 6px; font: 12px "Open Sans", sans-serif; text-align: center; }
.t-clock { width: 72px; margin-left: 4px; margin-right: 4px; display: flex; flex-direction: column; align-items: center; gap: 2px; font: 12px/17px "Open Sans", sans-serif; }
```
